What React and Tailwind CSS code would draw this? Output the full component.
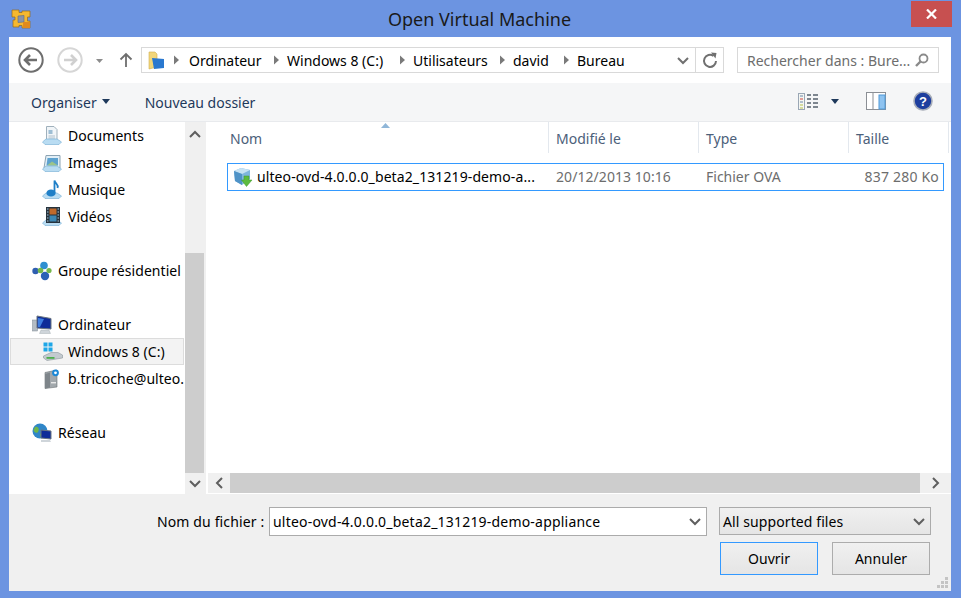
import React from "react";

const Tri = ({ className = "" }) => (
  <svg width="7" height="10" viewBox="0 0 7 10" className={className}><path d="M1 0.5 L6 5 L1 9.5 Z" fill="#7a7a7a" /></svg>
);
const Chevron = ({ dir = "down", color = "#5f5f5f" }) => {
  const d = { down: "M1 2 L6 7 L11 2", up: "M1 7 L6 2 L11 7", left: "M8 1 L3 6 L8 11", right: "M3 1 L8 6 L3 11" }[dir];
  const isV = dir === "down" || dir === "up";
  return (
    <svg width={isV ? 12 : 11} height={isV ? 9 : 12} viewBox={isV ? "0 0 12 9" : "0 0 11 12"}>
      <path d={d} fill="none" stroke={color} strokeWidth="2" />
    </svg>
  );
};
const Caret = ({ color = "#1e395b" }) => (
  <svg width="8" height="5" viewBox="0 0 8 5"><path d="M0 0 H8 L4 5 Z" fill={color} /></svg>
);

const Shelf = () => (
  <path d="M0.5 16 L4 13 H15 L19.5 16 L17 18.5 H3 Z" fill="#b9dcf2" stroke="#7fb4d8" strokeWidth="0.7" />
);
const IconDocuments = () => (
  <svg width="20" height="20" viewBox="0 0 20 20"><path d="M4.5 0.5 H12 L15 3.5 V15 H4.5 Z" fill="#f1f5f8" stroke="#9fb0bc" /><rect x="6.5" y="4" width="4" height="4" fill="#9ebed4" /><path d="M6.5 10H13 M6.5 12H13" stroke="#b0c0cc" /><Shelf /></svg>
);
const IconImages = () => (
  <svg width="20" height="20" viewBox="0 0 20 20"><path d="M4 2.5 H18 V15 H2 Z" fill="#e2eff7" stroke="#8ca3b3" /><path d="M5.5 5 H16 V12.5 H4.5 Z" fill="#5da2cf" /><path d="M5 12.5 L10 8.5 L16 12.5Z" fill="#9cc48a" /><Shelf /></svg>
);
const IconMusic = () => (
  <svg width="20" height="20" viewBox="0 0 20 20"><Shelf /><ellipse cx="9" cy="13" rx="4.6" ry="3.6" fill="#1f7fc7" /><path d="M12.5 13 V0.5 C13 4 17 4 15.5 8" fill="none" stroke="#1f7fc7" strokeWidth="1.8" /></svg>
);
const IconVideos = () => (
  <svg width="20" height="20" viewBox="0 0 20 20"><Shelf /><rect x="4" y="0" width="14" height="16" fill="#26323c" /><path d="M5 2H6.5 M5 5H6.5 M5 8H6.5 M5 11H6.5 M5 14H6.5 M15.5 2H17 M15.5 5H17 M15.5 8H17 M15.5 11H17 M15.5 14H17" stroke="#a8c8dc" /><rect x="7.5" y="1.5" width="7" height="6" fill="#c06a2c" /><rect x="7.5" y="8.5" width="7" height="6" fill="#3d88b5" /></svg>
);
const IconGroup = () => (
  <svg width="20" height="20" viewBox="0 0 20 20"><circle cx="3.5" cy="10" r="3.2" fill="#2f5fb0" /><circle cx="12" cy="4.5" r="3.8" fill="#2f8fd0" /><circle cx="13" cy="15" r="4.2" fill="#2a62b5" /><circle cx="8.5" cy="9.5" r="2.8" fill="#74b84c" /><circle cx="17" cy="9.5" r="2.6" fill="#74b84c" /></svg>
);
const IconComputer = () => (
  <svg width="20" height="20" viewBox="0 0 20 20"><rect x="0.5" y="5" width="5" height="11" fill="#b4bcc4" stroke="#7f8a93" strokeWidth="0.5" /><path d="M5 1 L19 3.5 V14 L5 13 Z" fill="#0f2c98" stroke="#6b7680" /><path d="M6 3 L12 4 L8 12 L6 12 Z" fill="#3f7ee0" /><path d="M9 15 H17 L18.5 18.5 H7.5 Z" fill="#cfd5da" stroke="#9aa3aa" strokeWidth="0.4" /></svg>
);
const IconDrive = () => (
  <svg width="20" height="20" viewBox="0 0 20 20">
    <rect x="0.5" y="0.5" width="4" height="4" fill="#1ea7e8" /><rect x="5.5" y="0.5" width="4" height="4" fill="#1ea7e8" /><rect x="0.5" y="5.5" width="4" height="4" fill="#1ea7e8" /><rect x="5.5" y="5.5" width="4" height="4" fill="#1ea7e8" />
    <path d="M0.5 14 L8 10.5 H15 L19.5 13 V16 L4 18.5 L0.5 16 Z" fill="#c3cacf" stroke="#8b959c" strokeWidth="0.6" /><rect x="3.5" y="15" width="8" height="1.8" fill="#4cae4c" />
  </svg>
);
const IconNetDrive = () => (
  <svg width="20" height="20" viewBox="0 0 20 20"><path d="M3 3.5 L15 1 V18 L3 19.5 Z" fill="#a2a8ac" stroke="#6c7276" strokeWidth="0.6" /><path d="M3 5 L8 3.5 V18.5 L3 19.5Z" fill="#7e858a" /><rect x="9" y="13" width="5" height="1.4" fill="#e8e8e8" /><circle cx="13.5" cy="3.8" r="3.4" fill="#1b87d6" /><circle cx="13.5" cy="3.8" r="1.4" fill="#ffffff" /></svg>
);
const IconNetwork = () => (
  <svg width="20" height="20" viewBox="0 0 20 20"><circle cx="8" cy="8" r="7.5" fill="#2f86c8" /><path d="M3 4 C6 3 8 6 6 9 C4 11 2 9 1.5 7 Z M8 11 C11 10 12 13 9 15 Z" fill="#6fb64a" /><path d="M9 7 L19 8 V16 L9 15 Z" fill="#0f2c98" stroke="#6b7680" /><path d="M9 17 H18 L19 19 H9 Z" fill="#cfd5da" /></svg>
);
const IconOva = () => (
  <svg width="20" height="20" viewBox="0 0 20 20">
    <path d="M1 4 L8 1 L17 3 L17 12 L9 18 L2 14 Z" fill="#7fb6dd" /><path d="M1 4 L9 7 L17 3 L8 1 Z" fill="#c8e3f4" /><path d="M1 4 L9 7 V18 L2 14 Z" fill="#4f93c7" />
    <path d="M11 9 H16 V13 H19 L13.5 19.5 L8.5 13 H11 Z" fill="#5dbb3f" stroke="#3f9a2a" strokeWidth="0.5" />
  </svg>
);
const AppLogo = () => (
  <svg width="20" height="20" viewBox="0 0 20 20">
    <path d="M1 1 H8 V3.5 H11 V2 H19 V8 H16.5 V12 H19 V19 H11 V16.5 H8 V18 H2 V11 H4 V8 H1 Z" fill="#f6b82f" stroke="#9a6c1a" strokeWidth="0.7" />
    <path d="M7 7 L13 6.5 V13 L7 13.5 Z" fill="#8a94a8" stroke="#5f6a80" strokeWidth="0.6" />
    <path d="M12 13 L19 13 V19 H12 Z" fill="#e08a1e" />
  </svg>
);

const SideRow = ({ icon, children, indent, selected }) => (
  <div className={`flex items-center h-[27px] text-[14px] text-black whitespace-nowrap overflow-hidden ${selected ? "ml-[1px] mr-[1px] border border-[#dcdcdc] bg-[#f3f3f3]" : ""}`}>
    <div className={`flex items-center shrink-0 ${indent ? (selected ? "ml-[32px]" : "ml-[33px]") : "ml-[23px]"}`}>{icon}</div>
    <span className={`tracking-[0.05px] ${selected ? "ml-[5px]" : "ml-[6px]"}`}>{children}</span>
  </div>
);
const Gap = () => <div className="h-[27px]" />;

const HeadCell = ({ w, children, pl = "pl-[7px]" }) => (
  <div className={`h-[31px] pt-[2px] flex items-center shrink-0 border-r border-[#e3e8ee] ${pl}`} style={{ width: w }}>
    {children}
  </div>
);

export default function App() {
  return (
    <div className="w-[961px] h-[598px] bg-[#6c94e1] flex flex-col overflow-hidden text-[14px]" style={{ fontFamily: '"Noto Sans", "Open Sans", sans-serif' }}>
      {/* Title bar */}
      <div className="h-[37px] shrink-0 flex items-start">
        <div className="ml-[11px] mt-[9px] shrink-0"><AppLogo /></div>
        <div className="flex-1 text-center text-[18px] leading-[24px] text-[#1a1a1a] mt-[7px] pl-[17px] whitespace-nowrap">Open Virtual Machine</div>
        <div className="w-[41px] h-[26px] mt-[1px] mr-[9px] bg-[#c75050] flex items-center justify-center shrink-0">
          <svg width="11" height="10" viewBox="0 0 11 10"><path d="M1 0.5 L10 9.5 M10 0.5 L1 9.5" stroke="#fff" strokeWidth="2.2" /></svg>
        </div>
      </div>

      {/* Window body */}
      <div className="ml-[9px] w-[942px] h-[554px] flex flex-col bg-white shrink-0">
        {/* Nav bar */}
        <div className="h-[46px] shrink-0 flex items-start bg-white">
          <svg width="130" height="46" viewBox="0 0 130 46" className="shrink-0">
            <circle cx="22" cy="23" r="11.7" fill="#fff" stroke="#6e6e6e" strokeWidth="2" />
            <path d="M28 23 H16 M21 18 L16 23 L21 28" fill="none" stroke="#6e6e6e" strokeWidth="2.6" />
            <circle cx="61" cy="23" r="11.7" fill="#fff" stroke="#d6d6d6" strokeWidth="2" />
            <path d="M55 23 H67 M62 18 L67 23 L62 28" fill="none" stroke="#d0d0d0" strokeWidth="2.6" />
            <path d="M87 22 H94 L90.5 26 Z" fill="#8c8c8c" />
            <path d="M117 30 V17 M111.5 22.5 L117 17 L122.5 22.5" fill="none" stroke="#6e6e6e" strokeWidth="1.8" />
          </svg>
          <div className="ml-[2px] mt-[10px] w-[583px] h-[26px] border border-[#d9d9d9] flex items-center shrink-0">
            <div className="w-[28px] shrink-0 flex justify-center">
              <svg width="17" height="19" viewBox="0 0 17 19"><path d="M1 1 H7 L9 3 V16 L1 18 Z" fill="#f2d67a" stroke="#d0b050" strokeWidth="0.6" /><path d="M4 7 L16 8 V17 L6 18 Z" fill="#2a78cf" /></svg>
            </div>
            <Tri className="ml-[3px] mr-[9px]" />
            <span className="w-[84px] shrink-0">Ordinateur</span>
            <Tri className="mr-[7px]" />
            <span className="w-[112px] shrink-0 whitespace-nowrap">Windows 8 (C:)</span>
            <Tri className="mr-[7px]" />
            <span className="w-[86px] shrink-0">Utilisateurs</span>
            <Tri className="mr-[7px]" />
            <span className="w-[50px] shrink-0">david</span>
            <Tri className="mr-[7px]" />
            <span className="flex-1">Bureau</span>
            <div className="w-[24px] flex justify-center"><Chevron dir="down" color="#707070" /></div>
            <div className="w-[28px] h-full border-l border-[#d9d9d9] flex items-center justify-center">
              <svg width="16" height="17" viewBox="0 0 16 17"><path d="M11.5 4 A6 6 0 1 0 14 9" fill="none" stroke="#707070" strokeWidth="2" /><path d="M9 0.5 L14.5 1 L13.5 6.5 Z" fill="#707070" /></svg>
            </div>
          </div>
          <div className="ml-[13px] mt-[10px] w-[202px] h-[26px] border border-[#d9d9d9] flex items-center pl-[9px] shrink-0 whitespace-nowrap text-[#6d6d6d]">
            <span className="w-[168px] shrink-0 overflow-hidden">Rechercher dans : Bure...</span>
            <svg width="14" height="14" viewBox="0 0 14 14"><circle cx="8.5" cy="5.5" r="4" fill="none" stroke="#8a8a8a" strokeWidth="1.8" /><path d="M5.5 8.5 L1 13" stroke="#8a8a8a" strokeWidth="2.4" /></svg>
          </div>
        </div>

        {/* Toolbar */}
        <div className="h-[39px] shrink-0 bg-[#f5f6f7] border-b border-[#e8eaed] flex items-center text-[#1e395b]">
          <span className="ml-[22px]">Organiser</span>
          <span className="ml-[5px] mb-[1px]"><Caret /></span>
          <span className="ml-[35px]">Nouveau dossier</span>
          <div className="flex-1" />
          <svg width="20" height="17" viewBox="0 0 20 17" className="shrink-0 mb-[2px]">
            <rect x="0.5" y="0.5" width="6" height="16" fill="#f4f6f2" stroke="#9aa7b5" />
            <path d="M2 3H5" stroke="#6a87a8" /><path d="M2 6H5" stroke="#d0453c" /><path d="M2 9H5" stroke="#6a87a8" /><path d="M2 12H5" stroke="#b6c14d" /><path d="M2 15H5" stroke="#b6c14d" />
            <path d="M9 2H13 M15 2H20 M9 6H13 M15 6H20 M9 10H13 M15 10H20 M9 14H13 M15 14H20" stroke="#56616e" strokeWidth="1.4" />
          </svg>
          <span className="ml-[13px] mb-[2px]"><Caret /></span>
          <svg width="20" height="18" viewBox="0 0 20 18" className="ml-[27px] mb-[2px] shrink-0">
            <rect x="0.5" y="0.5" width="19" height="17" fill="#fff" stroke="#8b8f95" />
            <path d="M7 1V17" stroke="#8b8f95" /><rect x="13" y="3" width="6" height="14" fill="#8ec3f0" stroke="#4f9ad9" />
          </svg>
          <svg width="20" height="20" viewBox="0 0 20 20" className="ml-[27px] mr-[18px] mb-[2px] shrink-0">
            <circle cx="10" cy="10" r="9" fill="#1d3e9e" stroke="#a7adb8" strokeWidth="1.6" />
            <text x="10" y="15" textAnchor="middle" fontSize="13" fontWeight="700" fill="#fff" fontFamily="Liberation Sans">?</text>
          </svg>
        </div>

        {/* Main */}
        <div className="h-[372px] shrink-0 flex bg-white">
          {/* Sidebar */}
          <div className="w-[176px] shrink-0 overflow-hidden">
            <SideRow indent icon={<IconDocuments />}>Documents</SideRow>
            <SideRow indent icon={<IconImages />}>Images</SideRow>
            <SideRow indent icon={<IconMusic />}>Musique</SideRow>
            <SideRow indent icon={<IconVideos />}>Vidéos</SideRow>
            <Gap />
            <SideRow icon={<IconGroup />}>Groupe résidentiel</SideRow>
            <Gap />
            <SideRow icon={<IconComputer />}>Ordinateur</SideRow>
            <SideRow indent selected icon={<IconDrive />}>Windows 8 (C:)</SideRow>
            <SideRow indent icon={<IconNetDrive />}>b.tricoche@ulteo.</SideRow>
            <Gap />
            <SideRow icon={<IconNetwork />}>Réseau</SideRow>
          </div>
          {/* Side scrollbar */}
          <div className="w-[19px] shrink-0 bg-[#f0f0f0] flex flex-col">
            <div className="h-[131px] flex justify-center pt-[8px]"><Chevron dir="up" /></div>
            <div className="flex-1 bg-[#cdcdcd]" />
            <div className="h-[21px] flex justify-center items-center"><Chevron dir="down" /></div>
          </div>
          {/* Splitter */}
          <div className="w-[2px] shrink-0 bg-[#f0f0f0]" />
          {/* Files */}
          <div className="flex-1 flex flex-col min-w-0 pl-[2px]">
            <div className="flex-1 min-h-0 relative">
              <div className="absolute left-[173px] top-[1px]">
                <svg width="9" height="5" viewBox="0 0 9 5"><path d="M0 5 L4.5 0 L9 5 Z" fill="#8fb6d8" /></svg>
              </div>
              <div className="flex text-[#4c607a] ml-[16px]">
                <HeadCell w={325} pl="pl-[6px]">Nom</HeadCell>
                <HeadCell w={150}>Modifié le</HeadCell>
                <HeadCell w={150}>Type</HeadCell>
                <HeadCell w={100}>Taille</HeadCell>
              </div>
              <div className="ml-[19px] mt-[10px] mr-[7px] h-[28px] border border-[#3399ff] flex items-center whitespace-nowrap text-[#6d6d6d]">
                <div className="ml-[5px] w-[20px] shrink-0"><IconOva /></div>
                <span className="ml-[4px] w-[299px] shrink-0 text-black tracking-[0.1px] mb-[1px]">ulteo-ovd-4.0.0.0_beta2_131219-demo-a...</span>
                <span className="w-[150px] shrink-0 tracking-[0.06px] mb-[1px]">20/12/2013 10:16</span>
                <span className="w-[100px] shrink-0 mb-[1px]">Fichier OVA</span>
                <span className="flex-1 text-right pr-[4px] tracking-[0.2px] mb-[1px]">837 280 Ko</span>
              </div>
            </div>
            {/* H scrollbar */}
            <div className="h-[20px] shrink-0 bg-[#f0f0f0] flex items-stretch mb-[1px]">
              <div className="w-[22px] flex items-center justify-center"><Chevron dir="left" /></div>
              <div className="w-[690px] bg-[#cdcdcd]" />
              <div className="flex-1 flex items-center justify-center"><Chevron dir="right" /></div>
            </div>
          </div>
        </div>

        {/* Footer */}
        <div className="flex-1 bg-[#f0f0f0] relative text-black">
          <div className="flex items-start mt-[13px]">
            <span className="ml-[148px] w-[112px] h-[29px] flex items-center whitespace-nowrap tracking-[0.13px]">Nom du fichier :</span>
            <div className="w-[438px] h-[29px] bg-white border border-[#ababab] flex items-center pl-[3px] whitespace-nowrap">
              <span className="flex-1 tracking-[0.2px]">ulteo-ovd-4.0.0.0_beta2_131219-demo-appliance</span>
              <span className="mr-[5px] flex"><Chevron dir="down" /></span>
            </div>
            <div className="ml-[12px] w-[212px] h-[28px] border border-[#ababab] bg-gradient-to-b from-[#f0f0f0] to-[#e5e5e5] flex items-center pl-[3px] whitespace-nowrap">
              <span className="flex-1 tracking-[0.1px]">All supported files</span>
              <span className="mr-[5px] flex"><Chevron dir="down" /></span>
            </div>
          </div>
          <div className="flex mt-[6px] ml-[711px]">
            <div className="w-[98px] h-[33px] border border-[#3399ff] bg-gradient-to-b from-[#f0f0f0] to-[#e5e5e5] flex items-center justify-center">Ouvrir</div>
            <div className="ml-[14px] w-[98px] h-[33px] border border-[#acacac] bg-gradient-to-b from-[#f0f0f0] to-[#e5e5e5] flex items-center justify-center">Annuler</div>
          </div>
          <svg width="12" height="12" viewBox="0 0 12 12" className="absolute right-[2px] bottom-[2px]">
            <path d="M8 0h3v3H8z M4 4h3v3H4z M8 4h3v3H8z M0 8h3v3H0z M4 8h3v3H4z M8 8h3v3H8z" fill="#c4c4c4" />
          </svg>
        </div>
      </div>
    </div>
  );
}
